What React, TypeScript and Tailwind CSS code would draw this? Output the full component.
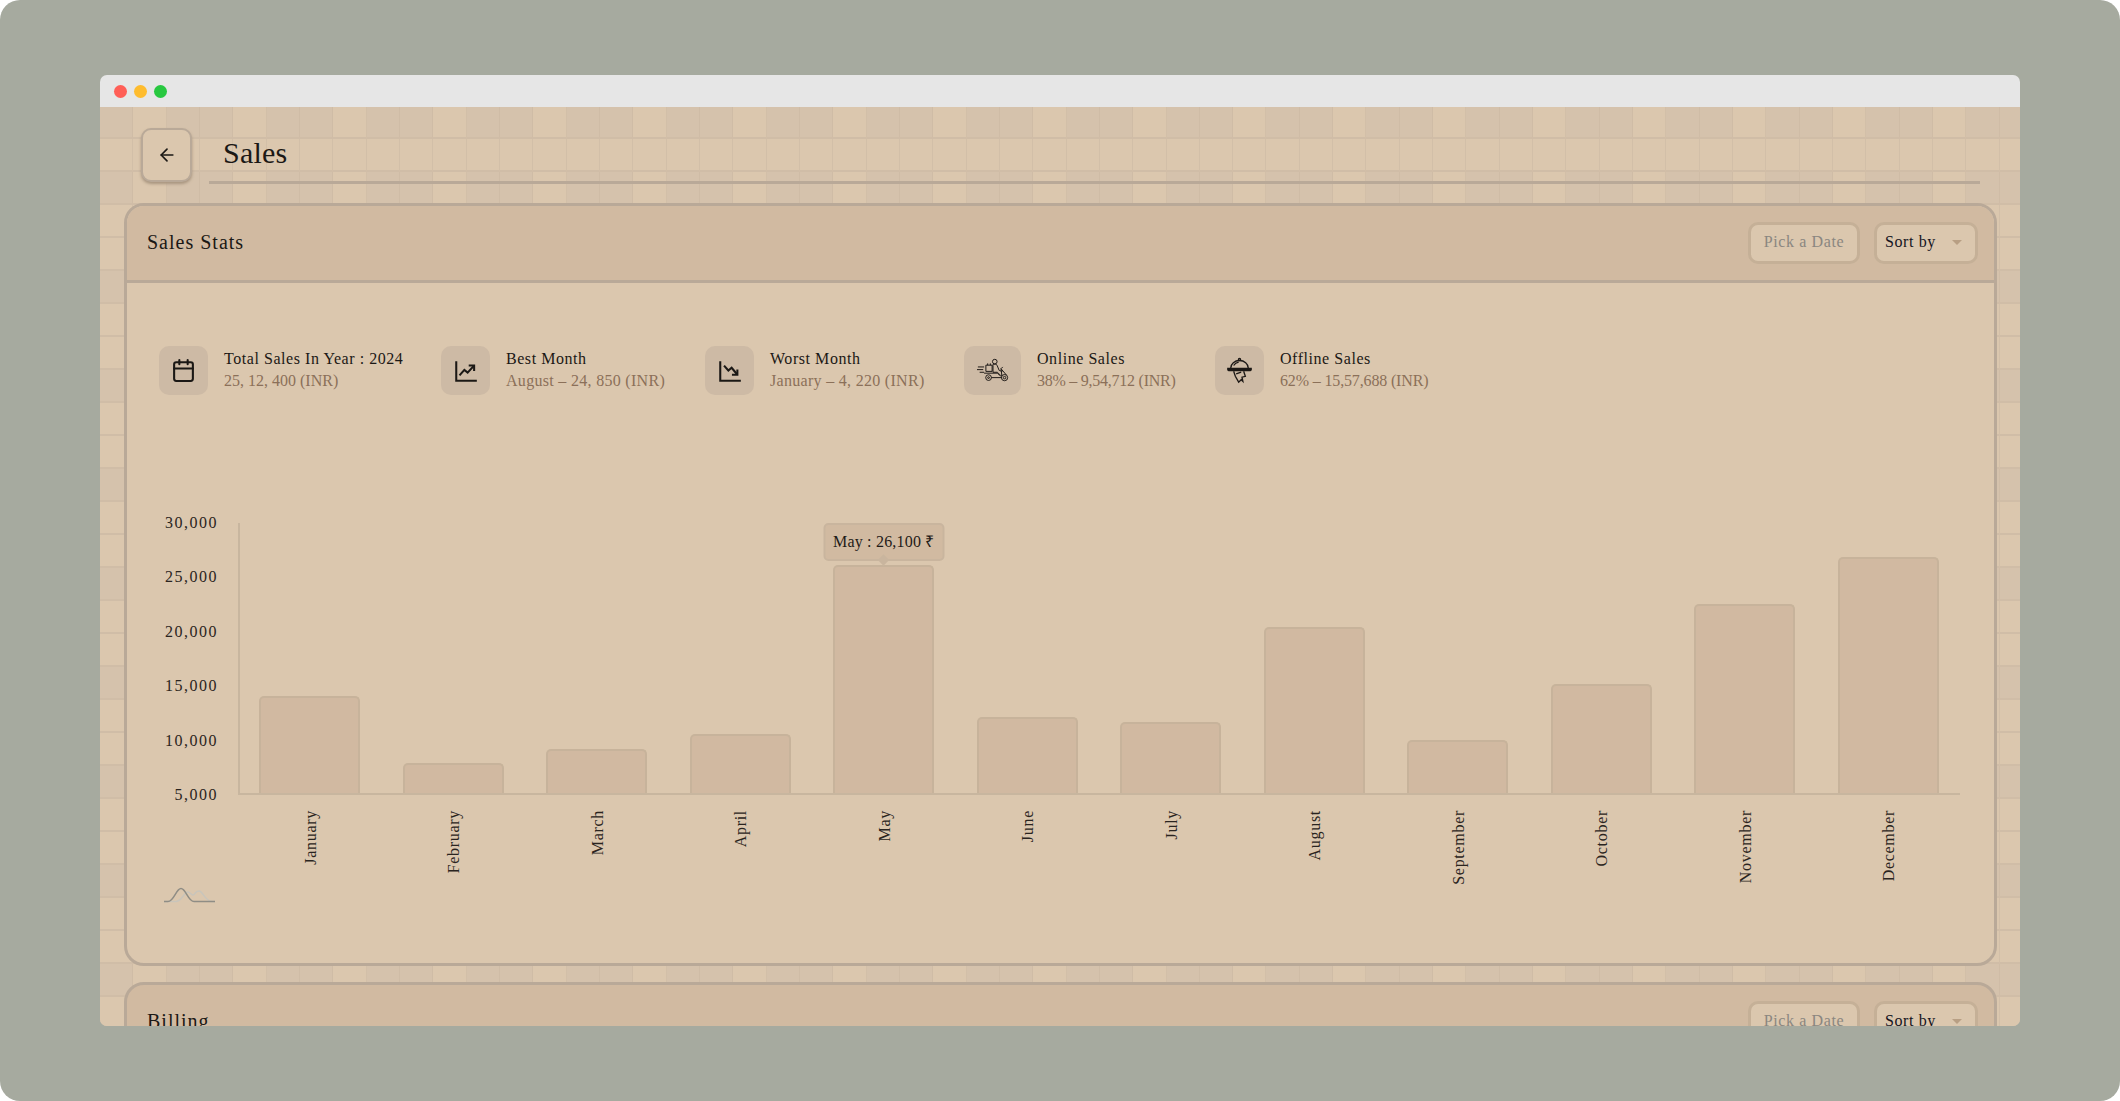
import { ArrowLeft, Calendar } from "lucide-react";
import type { ReactNode } from "react";

const months = [
  { name: "January", top: 696 },
  { name: "February", top: 763 },
  { name: "March", top: 749 },
  { name: "April", top: 734 },
  { name: "May", top: 565 },
  { name: "June", top: 717 },
  { name: "July", top: 722 },
  { name: "August", top: 627 },
  { name: "September", top: 740 },
  { name: "October", top: 684 },
  { name: "November", top: 604 },
  { name: "December", top: 557 },
];

const yTicks = ["30,000", "25,000", "20,000", "15,000", "10,000", "5,000"];

function TrendUp() {
  return (
    <svg viewBox="0 0 24 24" fill="none" stroke="currentColor" strokeWidth="1.9" className="size-[26px]">
      <path d="M3 3v18h19" />
      <path d="m6 16 4.5-5 3 2.5L19 7.5" />
      <path d="M14.5 7h5v5" />
    </svg>
  );
}

function TrendDown() {
  return (
    <svg viewBox="0 0 24 24" fill="none" stroke="currentColor" strokeWidth="1.9" className="size-[26px]">
      <path d="M3 3v18h19" />
      <path d="m6.5 7 4 4.5 3-2.5 5 6" />
      <path d="M18.8 10.5v5h-5" />
    </svg>
  );
}

function Scooter() {
  return (
    <svg viewBox="0 0 36 28" fill="none" stroke="#1c1815" strokeWidth="1.1" className="h-[25px] w-[32px]">
      <circle cx="20" cy="4" r="2.6" />
      <path d="M17.5 7.5c2-1 4-1 5 .5l2.5 6 3.5 1M18 8v8h5l3 3" />
      <path d="M10 8h7v7h-7zM12 8V6M15 8V6" />
      <path d="M8 17h15l3 3h2l-1-8 2-2M27 12l6 7" />
      <circle cx="13" cy="22" r="3.2" />
      <circle cx="13" cy="22" r="1" />
      <circle cx="31" cy="22" r="3.5" />
      <circle cx="31" cy="22" r="1.4" />
      <path d="M16 22h12" />
      <path d="M1 10h7M0 13h7M3 16h5" />
    </svg>
  );
}

function Cloche() {
  return (
    <svg viewBox="0 0 30 32" fill="none" stroke="#1c1815" strokeWidth="1.6" className="h-[27px] w-[25px]">
      <circle cx="15" cy="2.8" r="1.3" />
      <path d="M4.5 13a10.5 9 0 0 1 21 0" />
      <path d="M8 10c1.5-2.5 3.5-3.5 6-4" />
      <path d="M1 13.5h28v1.5a1.2 1.2 0 0 1-1 1H2a1.2 1.2 0 0 1-1-1z" fill="#1c1815" />
      <path d="M8 17l2 6 4 7 3-3 2 2-1-5 4-1-2-6" />
      <path d="M11 20l6-2" />
    </svg>
  );
}

const stats: { title: string; value: string; icon: ReactNode; box: string; text: string; tracking: string }[] = [
  { title: "Total Sales In Year : 2024", value: "25, 12, 400 (INR)", icon: <Calendar className="size-[25px]" strokeWidth={2} />, box: "w-[49px]", text: "w-[177px]", tracking: "tracking-[0px]" },
  { title: "Best Month", value: "August – 24, 850 (INR)", icon: <TrendUp />, box: "w-[49px]", text: "w-[159px]", tracking: "tracking-[0.3px]" },
  { title: "Worst Month", value: "January – 4, 220 (INR)", icon: <TrendDown />, box: "w-[49px]", text: "w-[154px]", tracking: "tracking-[0.3px]" },
  { title: "Online Sales", value: "38% – 9,54,712 (INR)", icon: <Scooter />, box: "w-[57px]", text: "w-[138px]", tracking: "tracking-[-0.25px]" },
  { title: "Offline Sales", value: "62% – 15,57,688 (INR)", icon: <Cloche />, box: "w-[49px]", text: "w-[147px]", tracking: "tracking-[-0.15px]" },
];

function CardHeader({ title }: { title: string }) {
  return (
    <div className="flex h-[74px] shrink-0 items-center justify-between pb-px pl-[20px] pr-[16px]">
      <h2 className="-mt-[2px] text-[20px] tracking-[1px] text-[#1b1815]">{title}</h2>
      <div className="flex gap-[14px]">
        <button className="h-[42px] w-[112px] rounded-[10px] border-[3px] border-[#c5b097] bg-[#dbc7ae] pb-px text-[16px] tracking-[0.6px] text-[#8a8680]">
          Pick a Date
        </button>
        <button className="flex h-[42px] w-[104px] items-center justify-between rounded-[10px] border-[3px] border-[#c5b097] bg-[#dbc7ae] pb-px pl-[8px] pr-[13px] text-[16px] tracking-[0.6px] text-[#14141f]">
          Sort by
          <span className="mt-px h-0 w-0 border-x-[5px] border-t-[5px] border-x-transparent border-t-[#b89f84]" />
        </button>
      </div>
    </div>
  );
}

function Chart() {
  return (
    <div className="mt-[128px] flex pl-[38px]">
      <div className="flex h-[272px] w-[53px] flex-col items-end justify-between">
        {yTicks.map((t, i) => (
          <span
            key={t}
            className={
              i === 0
                ? "-mt-[11px] text-[16px] leading-[22px] tracking-[1.5px] text-[#2a2420]"
                : i === 5
                  ? "-mb-[11px] text-[16px] leading-[22px] tracking-[1.5px] text-[#2a2420]"
                  : "text-[16px] leading-[22px] tracking-[1.5px] text-[#2a2420]"
            }
          >
            {t}
          </span>
        ))}
      </div>
      <div className="ml-[20px] w-[1722px]">
        <div className="h-[272px] border-b-2 border-l-2 border-[#c8b69f]">
          <div className="-ml-[2px] grid h-full w-[1722px] grid-cols-12">
            {months.map((m) => (
              <div key={m.name} className="relative flex items-end justify-center">
                {m.name === "May" && (
                  <div className="absolute left-1/2 top-0 flex h-[38px] w-[121px] -translate-x-1/2 items-center justify-center rounded-[5px] border-2 border-[#c9b59e] bg-[#d1baa1] text-[16px] tracking-[0.2px] text-[#1f1a17]">
                    May : 26,100 ₹
                    <span className="absolute -bottom-[5px] left-1/2 size-2 -translate-x-1/2 rotate-45 bg-[#c9b59e]" />
                  </div>
                )}
                <div
                  className="w-[101px] rounded-t-[5px] border-2 border-b-0 border-[#c7b39b] bg-[#d1b9a1]"
                  style={{ height: 793 - m.top }}
                />
              </div>
            ))}
          </div>
        </div>
        <div className="grid grid-cols-12 pt-[15px]">
          {months.map((m) => (
            <div key={m.name} className="flex items-start justify-center">
              <span className="translate-x-px rotate-180 text-[16px] leading-[18px] tracking-[0.7px] text-[#2a2420] [writing-mode:vertical-rl]">
                {m.name}
              </span>
            </div>
          ))}
        </div>
      </div>
    </div>
  );
}

export default function App() {
  return (
    <div className="h-[1101px] w-[2120px] overflow-hidden rounded-[20px] bg-[#a6aa9f] px-[100px] pt-[75px] font-['Liberation_Serif',serif]">
      <div className="h-[951px] w-[1920px] overflow-hidden rounded-[7px]">
        <div className="flex h-[32px] items-center gap-[7px] bg-[#e6e6e6] pl-[14px]">
          <span className="size-[13px] rounded-full bg-[#ff5f57]" />
          <span className="size-[13px] rounded-full bg-[#febc2e]" />
          <span className="size-[13px] rounded-full bg-[#28c840]" />
        </div>

        <div className="relative h-[919px] overflow-hidden bg-[#dbc7ad]">
          {/* tiled backdrop: first row and every third row have the darker tiles */}
          <div className="absolute inset-x-0 -top-px grid auto-rows-[33px] grid-cols-[repeat(58,33.33px)]">
            {Array.from({ length: 58 * 29 }, (_, i) => {
              const row = Math.floor(i / 58);
              const col = i % 58;
              const isDark = col % 3 !== 1 && (row === 0 || row % 3 === 2);
              return (
                <div
                  key={i}
                  className={
                    isDark
                      ? "border-b-2 border-r border-b-[#d0bda7] border-r-[#cfbca6] bg-[#d5c2ac]"
                      : "border-b-2 border-r border-b-[#d0bda7] border-r-[#d2bfa8] bg-[#dbc7ae]"
                  }
                />
              );
            })}
          </div>

          <div className="relative px-[24px] pt-[21px]">
            <div className="flex h-[56px] items-start">
              <button className="ml-[17px] flex h-[54px] w-[51px] items-center justify-center rounded-[10px] border-2 border-[#b9a998] bg-[#dbc7ae] shadow-[0_2px_3px_#a8957f]">
                <ArrowLeft className="size-[20px] text-[#1b1815]" strokeWidth={2} />
              </button>
              <div className="ml-[17px] h-[56px] w-[1771px] border-b-[3px] border-[#b9a998]">
                <h1 className="ml-[14px] text-[30px] leading-[50px] tracking-[0.2px] text-[#1b1815]">Sales</h1>
              </div>
            </div>

            <section className="mt-[19px] h-[763px] w-[1873px] overflow-hidden rounded-[20px] border-[3px] border-[#b9a998] bg-[#dbc7ae]">
              <div className="border-b-[3px] border-[#b9a998] bg-[#d1baa1]">
                <CardHeader title="Sales Stats" />
              </div>
              <div className="ml-[32px] mt-[63px] flex gap-[40px]">
                {stats.map((s) => (
                  <div key={s.title} className="flex h-[49px] items-center gap-[16px]">
                    <div className={`flex h-[49px] items-center justify-center rounded-[10px] bg-[#cdbaa5] text-[#1b1815] ${s.box}`}>
                      {s.icon}
                    </div>
                    <div className={`-mt-[2px] ${s.text}`}>
                      <div className="whitespace-nowrap text-[16px] leading-[22px] tracking-[0.55px] text-[#1b1815]">{s.title}</div>
                      <div className={`whitespace-nowrap text-[16px] leading-[22px] text-[#8b7059] ${s.tracking}`}>{s.value}</div>
                    </div>
                  </div>
                ))}
              </div>
              <Chart />
              <svg viewBox="0 0 51 16" fill="none" className="ml-[37px] mt-[2px] h-[16px] w-[51px]">
                <path d="M0 14.5h12C18 14.5 20 5 24 5c2 0 3 3 5 3s2-4 6-4 6 10.5 13 10.5h3" stroke="#c9c5bb" strokeWidth="1.5" />
                <path d="M0 14.5h4c6 0 8-13 13-13s7 13 13 13h21" stroke="#8f8d85" strokeWidth="1.5" />
              </svg>
            </section>

            <section className="mt-[16px] h-[120px] w-[1873px] overflow-hidden rounded-[20px] border-[3px] border-[#b9a998] bg-[#d1baa1]">
              <CardHeader title="Billing" />
            </section>
          </div>
        </div>
      </div>
    </div>
  );
}
